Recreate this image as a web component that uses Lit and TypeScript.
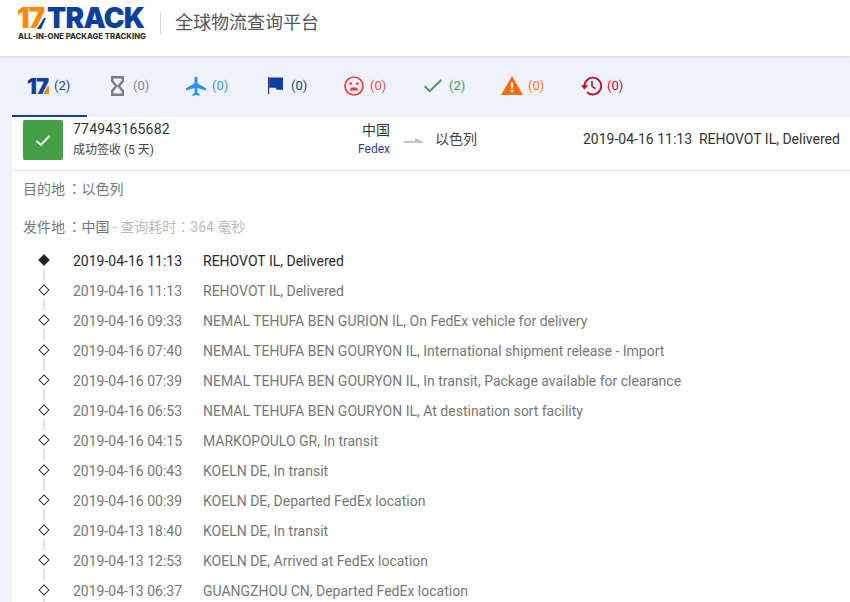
import { LitElement, html, css } from "lit";
import { customElement } from "lit/decorators.js";

const ICONS = {
  logo: html`<span class="mini"><b>17</b><svg width="6" height="8" viewBox="0 0 6 8"><path d="M0 8 5 0h1v8z" fill="#ff8a00"/></svg></span>`,
  hourglass: html`<svg width="13" height="20" viewBox="0 0 13 20"><path d="M1.2 1.2h10.6v3.9L7.8 10l4 4.9v3.9H1.2v-3.9L5.2 10 1.2 5.1z" fill="none" stroke="#777d89" stroke-width="2.4"/></svg>`,
  plane: html`<svg width="20" height="20" viewBox="0 0 20 20"><path d="M8.6 2C8.6.3 11.4.3 11.4 2v5.2l8.6 5.1v2.2l-8.6-2.6v4.6l2.2 1.6v1.7L10 19l-3.6 1v-1.7l2.2-1.6v-4.6L0 14.5v-2.2l8.6-5.1z" fill="#2b93f5"/></svg>`,
  flag: html`<svg width="15" height="17" viewBox="0 0 15 17"><path d="M0 0h1.2v17H0z" fill="#3a2f8a"/><path d="M1.2.5H15v12.3H8.6l-1-2H1.2z" fill="#0a3fa0"/></svg>`,
  sad: html`<svg width="20" height="20" viewBox="0 0 20 20"><circle cx="10" cy="10" r="9" fill="none" stroke="#f23c3c" stroke-width="1.7"/><circle cx="6.7" cy="7.6" r="1.4" fill="#f23c3c"/><circle cx="13.3" cy="7.6" r="1.4" fill="#f23c3c"/><path d="M5.5 14.6c.5-2.4 2.4-3.4 4.5-3.4s4 1 4.5 3.4z" fill="#f23c3c"/></svg>`,
  check: html`<svg width="18" height="14" viewBox="0 0 18 14"><path d="M.7 7.2l5 5L17.3 1" fill="none" stroke="#3f9c5a" stroke-width="2"/></svg>`,
  warn: html`<svg width="22" height="19" viewBox="0 0 22 19"><path d="M11 0l11 19H0z" fill="#ff6a00"/><path d="M9.9 6.5h2.2v6H9.9zM9.9 14h2.2v2.3H9.9z" fill="#fff"/></svg>`,
  history: html`<svg width="21" height="20" viewBox="0 0 21 20"><path d="M3.4 10a8.4 8.4 0 1 1 2.7 6.2" fill="none" stroke="#b5162c" stroke-width="1.9"/><path d="M0 9.2h7.4L3.4 13.5z" fill="#b5162c"/><path d="M11 5v5.4l3.6 2.2" fill="none" stroke="#b5162c" stroke-width="1.6"/></svg>`,
};

const TABS = [
  { icon: ICONS.logo, count: 2, cls: "c-navy" },
  { icon: ICONS.hourglass, count: 0, cls: "c-grey" },
  { icon: ICONS.plane, count: 0, cls: "c-sky" },
  { icon: ICONS.flag, count: 0, cls: "c-navy" },
  { icon: ICONS.sad, count: 0, cls: "c-red" },
  { icon: ICONS.check, count: 2, cls: "c-green" },
  { icon: ICONS.warn, count: 0, cls: "c-orange" },
  { icon: ICONS.history, count: 0, cls: "c-crimson" },
];

const EVENTS = [
  ["2019-04-16 11:13", "REHOVOT IL, Delivered"],
  ["2019-04-16 11:13", "REHOVOT IL, Delivered"],
  ["2019-04-16 09:33", "NEMAL TEHUFA BEN GURION IL, On FedEx vehicle for delivery"],
  ["2019-04-16 07:40", "NEMAL TEHUFA BEN GOURYON IL, International shipment release - Import"],
  ["2019-04-16 07:39", "NEMAL TEHUFA BEN GOURYON IL, In transit, Package available for clearance"],
  ["2019-04-16 06:53", "NEMAL TEHUFA BEN GOURYON IL, At destination sort facility"],
  ["2019-04-16 04:15", "MARKOPOULO GR, In transit"],
  ["2019-04-16 00:43", "KOELN DE, In transit"],
  ["2019-04-16 00:39", "KOELN DE, Departed FedEx location"],
  ["2019-04-13 18:40", "KOELN DE, In transit"],
  ["2019-04-13 12:53", "KOELN DE, Arrived at FedEx location"],
  ["2019-04-13 06:37", "GUANGZHOU CN, Departed FedEx location"],
];

@customElement("app-root")
export class AppRoot extends LitElement {
  static styles = css`
    :host {
      display: block;
      width: 850px;
      height: 602px;
      overflow: hidden;
      background: #fff;
      font-family: Roboto, "Noto Sans CJK SC", sans-serif;
      font-size: 14px;
      color: #333;
    }
    .header {
      height: 56px;
      box-sizing: border-box;
      padding: 0 0 10px 17px;
      display: flex;
      align-items: center;
      background: #fff;
      box-shadow: 0 1px 3px rgba(0, 0, 0, 0.12);
      position: relative;
    }
    .brand {
      width: 128px;
      margin-top: 2px;
      display: flex;
      flex-direction: column;
    }
    .wordmark {
      display: flex;
      align-items: flex-end;
      height: 21px;
      font-family: Inter, Roboto, sans-serif;
      font-weight: 900;
      font-size: 28px;
      line-height: 21px;
      white-space: nowrap;
    }
    .wm-17 { color: #ff8a00; letter-spacing: -1.2px; }
    .wm-track { color: #0a3f9c; letter-spacing: -0.7px; margin-left: 2px; }
    .wordmark svg { margin: 0 -1px 0 -7px; flex: none; }
    .tagline {
      font-family: Inter, Roboto, sans-serif;
      font-size: 7.7px;
      font-weight: 800;
      color: #333;
      white-space: nowrap;
      margin: 3px 0 0 1px;
      line-height: 9px;
    }
    .divider {
      width: 1px;
      height: 22px;
      background: #d8d8d8;
      margin: 0 14px 0 15px;
    }
    .title { font-size: 18px; color: #555; line-height: 24px; }
    .tabs {
      height: 61px;
      background: #eff2fb;
      padding-left: 12px;
      display: flex;
      box-sizing: border-box;
    }
    .tab {
      flex: none;
      width: 75px;
      margin-right: 4px;
      height: 61px;
      box-sizing: border-box;
      display: flex;
      align-items: center;
      padding-left: 10px;
      font-size: 13px;
      border-bottom: 2px solid transparent;
    }
    .tab.active { border-bottom-color: #0a3f9c; }
    .tab .ic { display: flex; width: 32px; justify-content: center; flex: none; }
    .mini { display: inline-flex; align-items: flex-end; }
    .mini b {
      font-family: Inter, Roboto, sans-serif;
      font-weight: 900;
      font-size: 22px;
      line-height: 16px;
      letter-spacing: -0.9px;
      color: #0a3f9c;
    }
    .mini svg { margin-left: -5px; }
    .c-navy { color: #1c3f8f; }
    .c-grey { color: #888; }
    .c-sky { color: #3a96f3; }
    .c-red { color: #f24b4b; }
    .c-green { color: #3f9c5a; }
    .c-orange { color: #ff7a1a; }
    .c-crimson { color: #a8163f; }
    .page {
      display: flex;
      background: #eff2fb;
      padding-left: 12px;
    }
    .card { background: #fff; flex: 1; min-width: 0; }
    .summary {
      height: 54px;
      box-sizing: border-box;
      border-bottom: 1px solid #e2e2e2;
      padding: 3px 11px 0;
      display: flex;
      align-items: flex-start;
      position: relative;
    }
    .status-box {
      width: 40px;
      height: 40px;
      border-radius: 2px;
      background: #43a047;
      display: flex;
      align-items: center;
      justify-content: center;
      flex: none;
    }
    .ident { width: 250px; margin-left: 10px; flex: none; }
    .num { font-size: 14px; line-height: 20px; margin-top: -1px; color: #333; letter-spacing: 0.2px; }
    .state { font-size: 12px; line-height: 20px; color: #444; margin-top: 1px; }
    .route-from { width: 67px; text-align: right; flex: none; }
    .route-from div:first-child { font-size: 14px; line-height: 20px; color: #333; }
    .route-from div:last-child { font-size: 12px; line-height: 18px; color: #1c3f9c; }
    .arrow { margin: 18px 12px 0 14px; flex: none; display: block; }
    .dest { width: 148px; flex: none; font-size: 14px; line-height: 20px; margin-top: 9px; color: #444; }
    .last { white-space: pre; line-height: 20px; margin-top: 9px; color: #333; }
    .meta { padding: 7px 11px 0; font-size: 14px; line-height: 20px; color: #777; }
    .meta .row { margin-bottom: 17px; }
    .meta .faint { color: #bbb; }
    .colon { font-family: "Noto Sans CJK JP", sans-serif; }
    .colon.tight { margin-left: -1px; }
    .timeline { margin-top: -8px; padding-left: 61px; }
    .event {
      display: flex;
      height: 30px;
      line-height: 30px;
      color: #777;
      position: relative;
      white-space: nowrap;
    }
    .event .time { width: 130px; flex: none; }
    .event.first { color: #2a2a2a; }
    .dot {
      position: absolute;
      left: -33px;
      top: 10px;
      width: 8px;
      height: 8px;
      box-sizing: border-box;
      background: #fff;
      border: 1.2px solid #333;
      transform: rotate(45deg);
    }
    .event.first .dot { background: #222; }
    .stem {
      position: absolute;
      left: -30px;
      top: 23px;
      width: 2px;
      height: 11px;
      background: #e0e0e0;
    }
  `;

  render() {
    return html`
      <div class="header">
        <div class="brand">
          <div class="wordmark">
            <span class="wm-17">17</span>
            <svg width="9" height="11" viewBox="0 0 9 11"><path d="M0 11 7 0h2L4 11z" fill="#0a3f9c"/></svg>
            <span class="wm-track">TRACK</span>
          </div>
          <div class="tagline">ALL-IN-ONE PACKAGE TRACKING</div>
        </div>
        <div class="divider"></div>
        <div class="title">全球物流查询平台</div>
      </div>
      <div class="tabs">
        ${TABS.map(
          (t, i) => html`<div class="tab ${i === 0 ? "active" : ""}">
            <span class="ic">${t.icon}</span><span class=${t.cls}>(${t.count})</span>
          </div>`
        )}
      </div>
      <div class="page">
        <div class="card">
          <div class="summary">
            <div class="status-box">
              <svg width="16" height="13" viewBox="0 0 16 13"><path d="M1.5 6.8l4.3 4.2L14.5 2" fill="none" stroke="#fff" stroke-width="1.8"/></svg>
            </div>
            <div class="ident">
              <div class="num">774943165682</div>
              <div class="state">成功签收 (5 天)</div>
            </div>
            <div class="route-from"><div>中国</div><div>Fedex</div></div>
            <svg class="arrow" width="19" height="6" viewBox="0 0 19 6"><path d="M0 3h11V0l8 3.5V5H0z" fill="#c4c4c4"/></svg>
            <div class="dest">以色列</div>
            <div class="last">2019-04-16 11:13  REHOVOT IL, Delivered</div>
          </div>
          <div class="meta">
            <div class="row">目的地 <span class="colon tight">：</span>以色列</div>
            <div class="row">发件地 <span class="colon tight">：</span>中国 <span class="faint">- 查询耗时<span class="colon">：</span>364 毫秒</span></div>
          </div>
          <div class="timeline">
            ${EVENTS.map(
              (e, i) => html`<div class="event ${i === 0 ? "first" : ""}">
                <span class="dot"></span><span class="stem"></span>
                <span class="time">${e[0]}</span><span>${e[1]}</span>
              </div>`
            )}
          </div>
        </div>
      </div>
    `;
  }
}
